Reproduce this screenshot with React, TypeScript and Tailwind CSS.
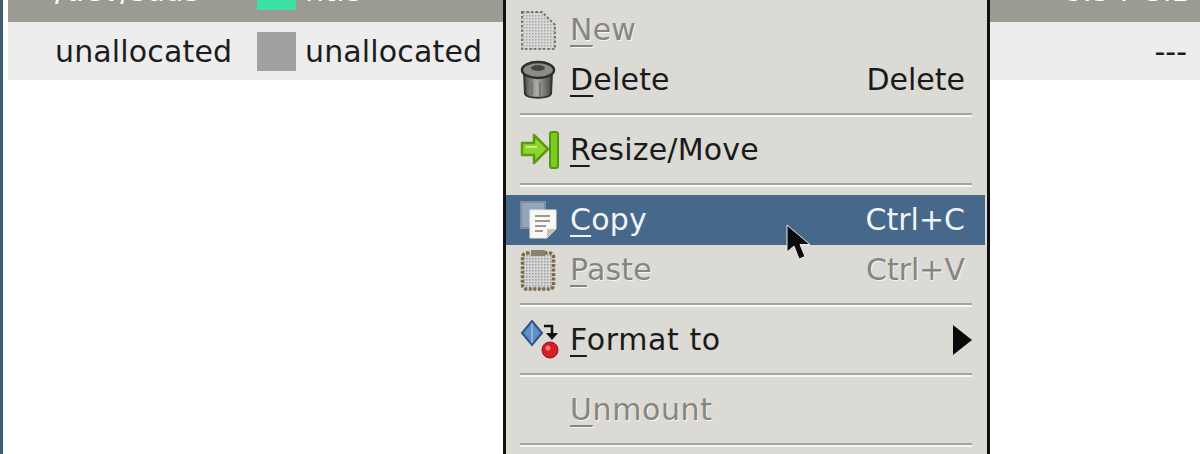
const fontClass = "font-['DejaVu_Sans','Liberation_Sans',sans-serif] text-[30px] leading-none";

function Underlined({ first, rest }: { first: string; rest: string }) {
  return (
    <span>
      <span className="underline decoration-2 underline-offset-[5px]">{first}</span>
      {rest}
    </span>
  );
}

function NewIcon() {
  return (
    <svg width="38" height="42" viewBox="0 0 38 42">
      <defs>
        <pattern id="dots" width="3" height="3" patternUnits="userSpaceOnUse">
          <rect width="3" height="3" fill="#d8d8d6" />
          <rect width="1.5" height="1.5" fill="#a8a8a6" />
        </pattern>
      </defs>
      <path d="M2 3h20l13 13v24H2z" fill="url(#dots)" stroke="#77776f" strokeWidth="2" strokeDasharray="2.5 2" />
    </svg>
  );
}

function TrashIcon() {
  return (
    <svg width="36" height="40" viewBox="0 0 36 40">
      <defs>
        <linearGradient id="can" x1="0" x2="1" y1="0" y2="0">
          <stop offset="0" stopColor="#4a4a45" />
          <stop offset="0.45" stopColor="#aeaea9" />
          <stop offset="1" stopColor="#45453f" />
        </linearGradient>
      </defs>
      <path d="M4 12l1 22c2 5 24 5 26 0l1-22z" fill="url(#can)" stroke="#33332f" strokeWidth="2" />
      <ellipse cx="18" cy="10" rx="16" ry="8" fill="#8c8c87" stroke="#2e2e2a" strokeWidth="2.5" />
      <ellipse cx="18" cy="8" rx="7" ry="3" fill="#45453f" />
      <path d="M12 21v14M20 22v14" stroke="#6f6f68" strokeWidth="1.5" />
    </svg>
  );
}

function ResizeIcon() {
  return (
    <svg width="40" height="38" viewBox="0 0 40 38">
      <path d="M2 12h12V4l14 14-14 14v-8H2z" fill="#8ed42a" stroke="#5c9a12" strokeWidth="2.5" strokeLinejoin="round" />
      <path d="M6 16h11" stroke="#c9ec8f" strokeWidth="2" />
      <rect x="30" y="1" width="8" height="36" rx="2" fill="#7ccb1e" stroke="#4f9a0c" strokeWidth="2" />
    </svg>
  );
}

function CopyIcon() {
  return (
    <svg width="38" height="40" viewBox="0 0 38 40">
      <rect x="1" y="2" width="24" height="26" fill="#93a6b9" stroke="#7b8fa3" strokeWidth="2" />
      <path d="M10 10h26v19l-9 9H10z" fill="#f9f8f4" stroke="#ecebe4" strokeWidth="1" />
      <path d="M15 16h15M15 21h15M15 26h11M15 31h8" stroke="#9a9a92" strokeWidth="2" />
      <path d="M27 38v-9h9z" fill="#c4c2b8" />
    </svg>
  );
}

function PasteIcon() {
  return (
    <svg width="36" height="42" viewBox="0 0 36 42">
      <defs>
        <pattern id="pdots" width="3" height="3" patternUnits="userSpaceOnUse">
          <rect width="3" height="3" fill="#d6d6d4" />
          <rect width="1.5" height="1.5" fill="#9c9ca0" />
        </pattern>
      </defs>
      <rect x="2.5" y="4" width="31" height="36" rx="4" fill="url(#pdots)" stroke="#7d6a45" strokeWidth="3.5" strokeDasharray="3 1.5" />
      <rect x="11" y="1" width="14" height="6" fill="#8a826e" />
    </svg>
  );
}

function FormatIcon() {
  return (
    <svg width="40" height="40" viewBox="0 0 40 40">
      <path d="M12 1l10 12-10 12L2 13z" fill="#5f8fc7" stroke="#2f5488" strokeWidth="2" />
      <path d="M12 3v20" stroke="#9dbde0" strokeWidth="1.5" />
      <path d="M24 6h8v9" fill="none" stroke="#111" strokeWidth="2.5" />
      <path d="M26 13h12l-6 7z" fill="#111" />
      <circle cx="30" cy="30" r="8" fill="#d81f26" stroke="#8c1116" strokeWidth="1" />
      <circle cx="28" cy="28" r="2.500" fill="#f47f7f" />
    </svg>
  );
}

function Separator() {
  return (
    <div className="ml-[14px] mr-[15px] flex h-5 flex-col justify-center">
      <div className="h-[2px] bg-[#a5a59e]" />
      <div className="h-[2px] bg-[#f7f7f4]" />
    </div>
  );
}

type ItemProps = {
  icon?: React.ReactNode;
  first: string;
  rest: string;
  shortcut?: string;
  disabled?: boolean;
  active?: boolean;
  arrow?: boolean;
  wide?: boolean;
};

function MenuItem({ icon, first, rest, shortcut, disabled, active, arrow, wide }: ItemProps) {
  const color = active
    ? "bg-[#46688b] text-[#f1f4f6]"
    : disabled
      ? "text-[#868681] [text-shadow:1px_1px_0_#f5f5f2]"
      : "text-[#1a1a1a]";
  return (
    <div className={`mr-[2px] flex h-[50px] items-center pl-[14px] pr-[20px] ${color}`}>
      <span className="flex w-[50px] shrink-0 items-center justify-start">{icon}</span>
      <span className={`flex-1 ${wide ? "tracking-[0.6px]" : "tracking-[0.2px]"}`}>
        <Underlined first={first} rest={rest} />
      </span>
      {shortcut && <span>{shortcut}</span>}
      {arrow && (
        <svg width="19" height="30" viewBox="0 0 19 30" className="-mr-[7px]">
          <path d="M0 0l19 15L0 30z" fill="#0a0a0a" />
        </svg>
      )}
    </div>
  );
}

function Cursor() {
  return (
    <svg width="26" height="40" viewBox="0 0 26 38" className="absolute left-[786px] top-[223px]">
      <path d="M1 1v27l7-6 5 13 6-2.500-5-12h10z" fill="#0a0a0a" stroke="#e8eef2" strokeWidth="1" />
    </svg>
  );
}

export default function App() {
  return (
    <div className={`relative h-[454px] w-[1200px] overflow-hidden bg-white ${fontClass}`}>
      <div className="flex h-full">
        <div className="w-[3px] shrink-0 bg-[#3f6072]" />
        <div className="ml-[5px] flex-1">
          <div className="flex h-[22px] items-end overflow-hidden bg-[#9b9a93] text-white">
            <span className="mb-[16px] ml-[47px] w-[202px] shrink-0">/dev/sda3</span>
            <span className="mb-[12px] h-[20px] w-[39px] shrink-0 bg-[#3de0a5]" />
            <span className="mb-[16px] ml-[9px]">ntfs</span>
            <span className="mb-[16px] ml-auto mr-[8px]">8.54 GiB</span>
          </div>
          <div className="flex h-[58px] items-center bg-[#ededed] pt-[2px] text-[#1c1c1c]">
            <span className="ml-[47px] w-[202px] shrink-0 tracking-[0.15px]">unallocated</span>
            <span className="-mt-[2px] h-[39px] w-[39px] shrink-0 bg-[#a0a0a0]" />
            <span className="ml-[9px] tracking-[0.15px]">unallocated</span>
            <span className="ml-auto mr-[13px]">---</span>
          </div>
        </div>
      </div>

      <div className="absolute left-[503px] top-0 h-[454px] w-[487px] border-x-[3px] border-[#111] bg-[#dbdad5] pt-[5px]">
        <MenuItem icon={<NewIcon />} first="N" rest="ew" disabled />
        <MenuItem icon={<TrashIcon />} first="D" rest="elete" shortcut="Delete" />
        <Separator />
        <MenuItem icon={<ResizeIcon />} first="R" rest="esize/Move" />
        <Separator />
        <MenuItem icon={<CopyIcon />} first="C" rest="opy" shortcut="Ctrl+C" active />
        <MenuItem icon={<PasteIcon />} first="P" rest="aste" shortcut="Ctrl+V" disabled />
        <Separator />
        <MenuItem icon={<FormatIcon />} first="F" rest="ormat to" arrow wide />
        <Separator />
        <MenuItem first="U" rest="nmount" disabled wide />
        <Separator />
      </div>

      <Cursor />
    </div>
  );
}
